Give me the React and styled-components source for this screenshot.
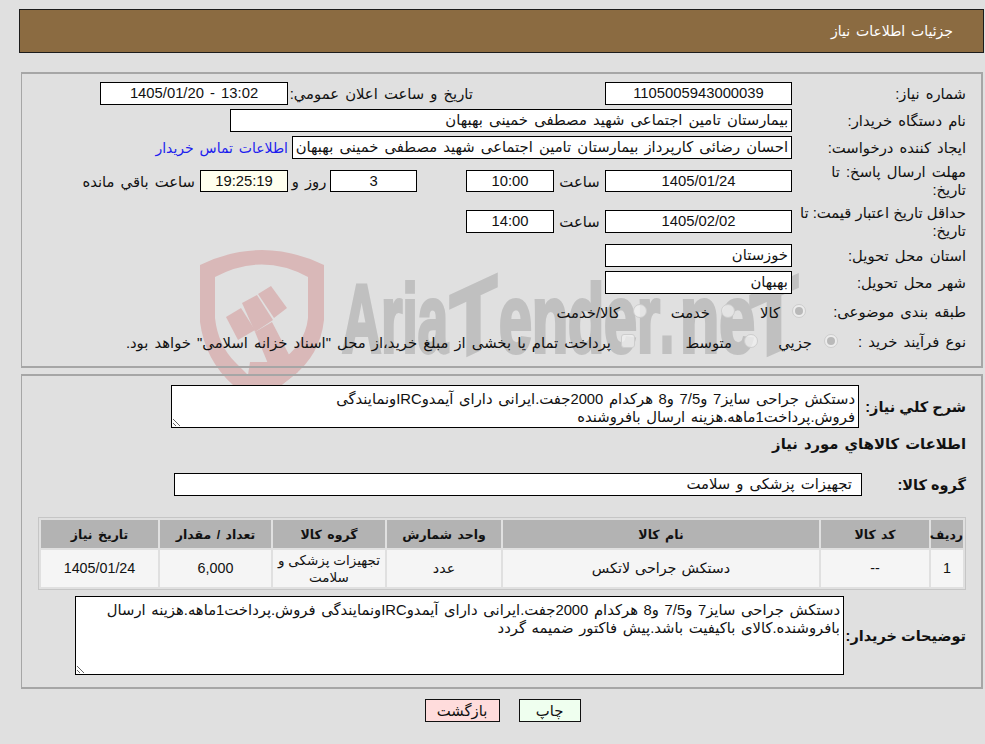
import React from 'react';
import styled, { createGlobalStyle } from 'styled-components';

const Global = createGlobalStyle`
    html, body { margin:0; padding:0; background:#e0e0e0; }
    body { font-family:"Liberation Sans","DejaVu Sans",sans-serif; font-size:14.8px; word-spacing:2px; color:#111; }
`;

const Page = styled.div`
    position:relative;
    width:985px;
    height:744px;
    overflow:hidden;
    box-sizing:border-box;
    padding:9px 1px 0 19px;
`;

const Watermark = styled.svg`
    position:absolute;
    left:0;
    top:0;
    z-index:0;
    word-spacing:0;
`;

const Content = styled.div`
    position:relative;
    z-index:1;
`;

const Header = styled.div`
    height:44px;
    box-sizing:border-box;
    background:#8b6b41;
    border:1px solid #1c1c1c;
    color:#fff;
    font-size:14px;
    line-height:43px;
    padding-right:30px;
`;

const Panel = styled.div`
    margin:${p => p.$top}px 1px 0 2px;
    height:${p => p.$height}px;
    box-sizing:border-box;
    border:1px solid #a6a6a6;
    border-width:2px 2px 2px 1px;
    padding:${p => p.$pad}px 15px 0 0;
`;

const Rows = styled.div`
    display:flex;
    flex-direction:column;
    gap:4px;
`;

const Row = styled.div`
    display:flex;
    align-items:center;
    min-height:${p => p.$h || 23}px;
`;

const Label = styled.div`
    flex:none;
    width:${p => p.$w || 174}px;
    line-height:18px;
    white-space:nowrap;
    word-spacing:${p => (p.$tight || p.$bold ? 0 : 2)}px;
    font-size:${p => (p.$bold ? 14.5 : 14.8)}px;
    font-weight:${p => (p.$bold ? 'bold' : 'normal')};
`;

const Field = styled.div`
    flex:none;
    width:${p => p.$w}px;
    height:${p => p.$h || 23}px;
    box-sizing:border-box;
    border:1px solid #000;
    background:${p => p.$bg || '#fff'};
    line-height:${p => (p.$h || 23) - 2}px;
    text-align:${p => (p.$center ? 'center' : 'right')};
    padding:0 ${p => p.$pad ?? 3}px;
    white-space:nowrap;
    overflow:hidden;
`;

const Caption = styled.div`
    flex:none;
    width:${p => p.$w}px;
    box-sizing:border-box;
    padding-right:${p => p.$pad || 0}px;
    text-align:${p => (p.$center ? 'center' : 'right')};
    white-space:nowrap;
`;

const Contact = styled.a`
    margin-right:4px;
    color:#1d1dee;
    font-size:14px;
    white-space:nowrap;
`;

const Options = styled.div`
    display:flex;
    align-items:center;
    white-space:nowrap;
`;

const Radio = styled.span`
    flex:none;
    box-sizing:border-box;
    width:14px;
    height:14px;
    margin-top:-3px;
    border:1px solid #cdcdcd;
    border-radius:${p => (p.$square ? '3px' : '50%')};
    background:rgba(240,240,240,.75);
    display:flex;
    align-items:center;
    justify-content:center;
    &::after {
        content:'';
        display:${p => (p.$on ? 'block' : 'none')};
        width:8px;
        height:8px;
        border-radius:50%;
        background:#b9b9b9;
    }
`;

const OptionText = styled.span`
    flex:none;
    width:${p => (p.$w ? `${p.$w}px` : 'auto')};
    margin-right:${p => p.$mr}px;
`;

const Area = styled.textarea`
    flex:none;
    display:block;
    width:${p => p.$w}px;
    height:${p => p.$h}px;
    box-sizing:border-box;
    margin:0;
    border:1px solid #000;
    border-radius:0;
    outline:none;
    background:#fff;
    color:#111;
    font:14.8px/18px "Liberation Sans","DejaVu Sans",sans-serif;
    word-spacing:1.5px;
    padding:4px 3px 0;
`;

const Heading = styled.div`
    margin-top:6px;
    height:20px;
    line-height:20px;
    font-weight:bold;
`;

const Group = styled(Row)`
    margin-top:19px;
`;

const Grid = styled.table`
    margin:21px 0 0 0;
    width:928px;
    table-layout:fixed;
    border-collapse:separate;
    border-spacing:2px;
    border:1px solid #c6c6c6;
    & th {
        height:28px;
        padding:0;
        background:#b3b3b3;
        font-size:12.5px;
        font-weight:bold;
        white-space:nowrap;
    }
    & td {
        height:37px;
        padding:0;
        background:#f5f5f5;
        text-align:center;
        font-size:14.3px;
        word-spacing:1px;
        line-height:17px;
        white-space:nowrap;
    }
`;

const GroupCell = styled.td`
    && {
        font-size:13.5px;
        word-spacing:0;
    }
`;

const Notes = styled(Row)`
    margin-top:6px;
`;

const Buttons = styled.div`
    display:flex;
    justify-content:center;
    gap:19px;
    margin:10px 0 0 2px;
`;

const Button = styled.button`
    width:${p => p.$w}px;
    height:23px;
    box-sizing:border-box;
    padding:0;
    border:1px solid #111;
    background:${p => p.$bg};
    color:#111;
    font:14.8px "Liberation Sans","DejaVu Sans",sans-serif;
`;

const desc = 'دستکش جراحی سایز7 و7/5 و8 هرکدام 2000جفت.ایرانی دارای آیمدوIRCونمایندگی\nفروش.پرداخت1ماهه.هزینه ارسال بافروشنده';
const notes = 'دستکش جراحی سایز7 و7/5 و8 هرکدام 2000جفت.ایرانی دارای آیمدوIRCونمایندگی فروش.پرداخت1ماهه.هزینه ارسال\nبافروشنده.کالای باکیفیت باشد.پیش فاکتور ضمیمه گردد';

const Logo = () => (
    <Watermark width="985" height="744" viewBox="0 0 985 744" aria-hidden="true">
        <path
            fillRule="evenodd"
            fill="#d9b8b8"
            d="M200 265 Q262 235 324 265 L324 320 Q320 355 293 376 L262 400 L233 385 Q205 360 200 322 Z
               M215 277 L215 318 Q218 345 235 362 L248 375 L250 362 L279 362 Q305 345 308 318 L308 277 Q262 252 215 277 Z"
        />
        <g fill="#d9b8b8">
            <path d="M226 317 L241 308 L255 330 L238 340 Z" />
            <path d="M242 303 L257 295 L273 320 L255 332 Z" />
            <path d="M258 294 L271 286 L287 308 L274 318 Z" />
            <path d="M255 332 L272 322 L298 372 L278 388 Z" />
        </g>
        <g
            fill="#c0c0c0"
            stroke="#c0c0c0"
            strokeWidth="4"
            fontFamily="'Liberation Sans',sans-serif"
            fontWeight="bold"
            fontSize="96"
        >
            <text x="342" y="352" textLength="106" lengthAdjust="spacingAndGlyphs">Aria</text>
            <text x="450" y="352" textLength="47" lengthAdjust="spacingAndGlyphs" transform="translate(473 352) skewY(-25) translate(-473 -352)">T</text>
            <text x="499" y="352" textLength="161" lengthAdjust="spacingAndGlyphs">ender</text>
            <text x="660" y="352" textLength="14" lengthAdjust="spacingAndGlyphs">.</text>
            <text x="680" y="352" textLength="75" lengthAdjust="spacingAndGlyphs">ne</text>
            <text x="750" y="352" textLength="48" lengthAdjust="spacingAndGlyphs" transform="translate(774 352) skewY(-24) translate(-774 -352)">T</text>
        </g>
    </Watermark>
);

const App = () => {
    return (
        <Page>
            <Global />
            <Logo />
            <Content dir="rtl">
                <Header>جزئیات اطلاعات نیاز</Header>
                <Panel $top={19} $height={296} $pad={8}>
                    <Rows>
                        <Row>
                            <Label>شماره نیاز:</Label>
                            <Field $w={187} $center>1105005943000039</Field>
                            <Caption $w={317} $pad={132}>تاریخ و ساعت اعلان عمومي:</Caption>
                            <Field $w={188} $center>13:02 - 1405/01/20</Field>
                        </Row>
                        <Row>
                            <Label>نام دستگاه خریدار:</Label>
                            <Field $w={562}>بیمارستان تامین اجتماعی شهید مصطفی خمینی بهبهان</Field>
                        </Row>
                        <Row>
                            <Label>ایجاد کننده درخواست:</Label>
                            <Field $w={500}>احسان رضائی کارپرداز بیمارستان تامین اجتماعی شهید مصطفی خمینی بهبهان</Field>
                            <Contact>اطلاعات تماس خریدار</Contact>
                        </Row>
                        <Row $h={36}>
                            <Label>مهلت ارسال پاسخ: تا<br />تاریخ:</Label>
                            <Field $w={187} $h={22} $center>1405/01/24</Field>
                            <Caption $w={51} $center>ساعت</Caption>
                            <Field $w={88} $h={22} $center>10:00</Field>
                            <Caption $w={49} />
                            <Field $w={87} $h={22} $center>3</Field>
                            <Caption $w={42} $center>روز و</Caption>
                            <Field $w={88} $h={22} $center $bg="#ffffee">19:25:19</Field>
                            <Caption $w={117} $pad={5}>ساعت باقي مانده</Caption>
                        </Row>
                        <Row $h={37}>
                            <Label $tight>حداقل تاریخ اعتبار قیمت: تا<br />تاریخ:</Label>
                            <Field $w={187} $center>1405/02/02</Field>
                            <Caption $w={51} $center>ساعت</Caption>
                            <Field $w={88} $center>14:00</Field>
                        </Row>
                        <Row>
                            <Label>استان محل تحویل:</Label>
                            <Field $w={187}>خوزستان</Field>
                        </Row>
                        <Row>
                            <Label>شهر محل تحویل:</Label>
                            <Field $w={187}>بهبهان</Field>
                        </Row>
                        <Row $h={28}>
                            <Label $w={160}>طبقه بندی موضوعی:</Label>
                            <Options>
                                <Radio $on />
                                <OptionText $w={45} $mr={12}>کالا</OptionText>
                                <Radio />
                                <OptionText $w={63} $mr={11}>خدمت</OptionText>
                                <Radio />
                                <OptionText $mr={13}>کالا/خدمت</OptionText>
                            </Options>
                        </Row>
                        <Row $h={24}>
                            <Label $w={128}>نوع فرآیند خرید :</Label>
                            <Options>
                                <Radio $on />
                                <OptionText $w={54} $mr={12}>جزیي</OptionText>
                                <Radio />
                                <OptionText $w={97} $mr={12}>متوسط</OptionText>
                                <Radio $square />
                                <OptionText $mr={10}>پرداخت تمام یا بخشی از مبلغ خرید،از محل "اسناد خزانه اسلامی" خواهد بود.</OptionText>
                            </Options>
                        </Row>
                    </Rows>
                </Panel>
                <Panel $top={6} $height={315} $pad={9}>
                    <Row>
                        <Label $w={107} $bold>شرح كلي نياز:</Label>
                        <Area $w={688} $h={43} readOnly value={desc} />
                    </Row>
                    <Heading>اطلاعات كالاهاي مورد نياز</Heading>
                    <Group>
                        <Label $w={104} $bold>گروه کالا:</Label>
                        <Field $w={688} $pad={9}>تجهیزات پزشکی و سلامت</Field>
                    </Group>
                    <Grid>
                        <colgroup>
                            <col width="32" />
                            <col width="108" />
                            <col width="316" />
                            <col width="114" />
                            <col width="112" />
                            <col width="111" />
                            <col width="117" />
                        </colgroup>
                        <thead>
                            <tr>
                                <th>ردیف</th>
                                <th>کد کالا</th>
                                <th>نام کالا</th>
                                <th>واحد شمارش</th>
                                <th>گروه کالا</th>
                                <th>تعداد / مقدار</th>
                                <th>تاریخ نیاز</th>
                            </tr>
                        </thead>
                        <tbody>
                            <tr>
                                <td>1</td>
                                <td>--</td>
                                <td>دستکش جراحی لاتکس</td>
                                <td>عدد</td>
                                <GroupCell>تجهیزات پزشکی و<br />سلامت</GroupCell>
                                <td>6,000</td>
                                <td>1405/01/24</td>
                            </tr>
                        </tbody>
                    </Grid>
                    <Notes>
                        <Label $w={122} $bold>توضیحات خریدار:</Label>
                        <Area $w={769} $h={79} readOnly value={notes} />
                    </Notes>
                </Panel>
                <Buttons>
                    <Button $w={62} $bg="#efffef">چاپ</Button>
                    <Button $w={75} $bg="#ffdcdc">بازگشت</Button>
                </Buttons>
            </Content>
        </Page>
    );
};

export default App;
